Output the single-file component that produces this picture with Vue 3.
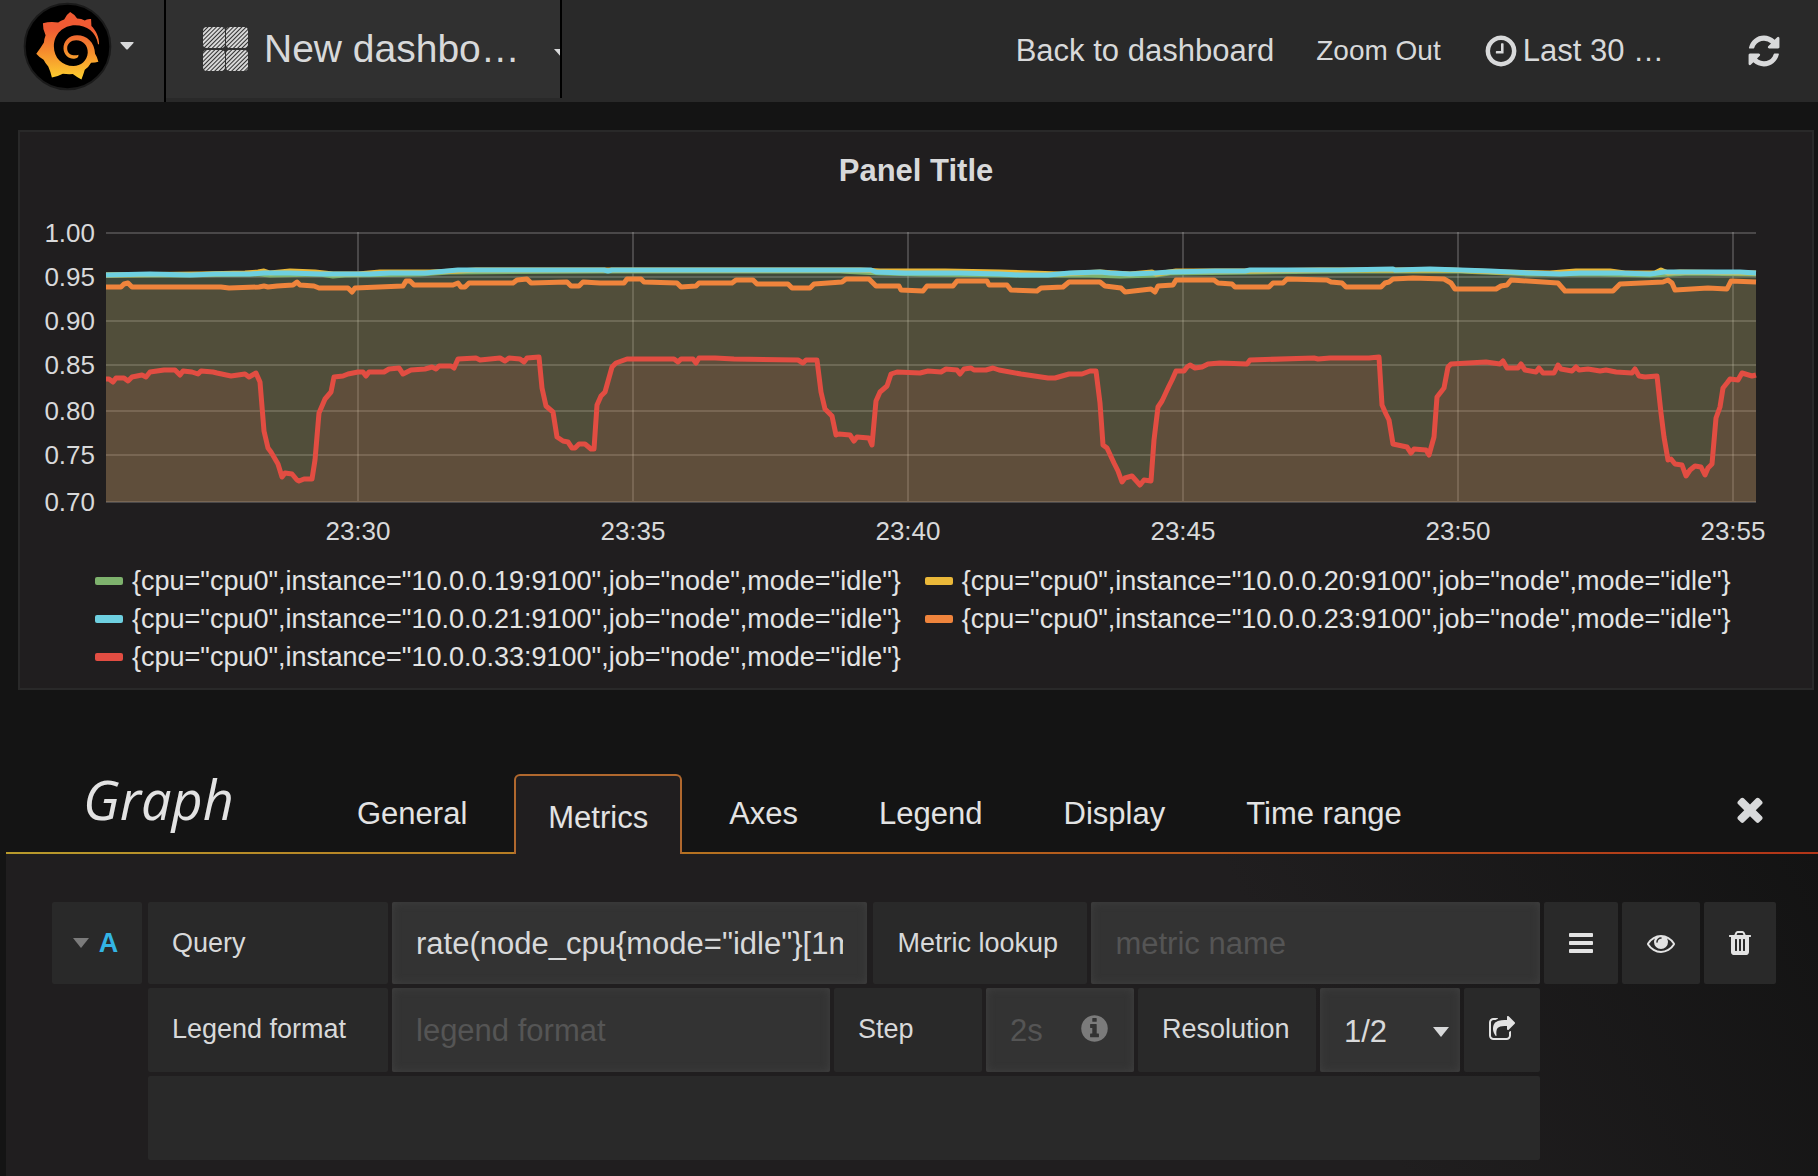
<script setup>
import { ref } from 'vue'

const tabs = ['General', 'Metrics', 'Axes', 'Legend', 'Display', 'Time range']
const activeTab = ref('Metrics')

const query = ref('rate(node_cpu{mode="idle"}[1m])')
const metric = ref('')
const legendFormat = ref('')
const step = ref('')
const resolution = ref('1/2')

const legend = [
  { color: '#7eb26d', instance: '10.0.0.19:9100' },
  { color: '#eab839', instance: '10.0.0.20:9100' },
  { color: '#6ed0e0', instance: '10.0.0.21:9100' },
  { color: '#ef843c', instance: '10.0.0.23:9100' },
  { color: '#e24d42', instance: '10.0.0.33:9100' },
]
const seriesName = (s) => `{cpu="cpu0",instance="${s.instance}",job="node",mode="idle"}`

const yTicks = [
  { label: '1.00', y: 233 },
  { label: '0.95', y: 277 },
  { label: '0.90', y: 321 },
  { label: '0.85', y: 365 },
  { label: '0.80', y: 411 },
  { label: '0.75', y: 455 },
  { label: '0.70', y: 502 },
]
const xTicks = [
  { label: '23:30', x: 358 },
  { label: '23:35', x: 633 },
  { label: '23:40', x: 908 },
  { label: '23:45', x: 1183 },
  { label: '23:50', x: 1458 },
  { label: '23:55', x: 1733 },
]

const cyan = '106,275 150,274 190,275 215,274 250,274 264,273 290,273 320,274 370,274 390,273 425,273 458,270 530,270 604,270 608,271 612,270 700,270 871,270 876,272 905,273 960,273 1000,274 1020,275 1048,275 1070,273 1100,272 1110,273 1130,274 1155,273 1170,272 1215,271 1245,271 1250,270 1340,270 1393,269 1395,270 1430,269 1460,270 1490,271 1530,273 1560,274 1580,273 1620,273 1650,274 1664,272 1690,272 1720,272 1740,272 1756,273'
const yellow = '106,275 200,274 245,273 258,272 264,271 270,273 290,271 315,272 333,274 358,274 380,272 403,272 430,272 458,271 476,270 530,270 640,270 660,270 720,270 860,270 880,271 945,271 1000,272 1030,273 1060,274 1100,272 1130,274 1152,272 1156,274 1176,271 1250,271 1320,270 1340,270 1381,270 1450,270 1500,272 1550,273 1576,271 1610,271 1625,273 1655,273 1661,270 1668,273 1680,272 1756,273'
const green = '106,275 180,275 260,274 270,275 320,274 333,276 345,275 420,274 450,272 600,271 612,271 700,271 840,271 880,273 920,274 1010,275 1048,275 1090,275 1120,276 1155,275 1170,273 1250,272 1340,271 1460,271 1530,274 1600,274 1650,275 1690,273 1756,274'
const orange = '106,287 121,287 124,284 128,283 132,287 221,287 229,288 259,287 264,286 268,287 277,286 293,285 297,282 300,285 314,286 319,288 348,288 352,292 355,288 403,286 406,281 410,281 414,285 453,285 458,283 461,287 465,287 469,283 513,283 517,280 527,279 531,283 567,282 571,286 579,286 583,282 600,283 624,283 627,279 641,279 644,282 677,283 681,287 696,286 699,283 732,283 736,280 753,280 757,284 788,284 792,288 810,288 814,284 842,282 846,279 869,279 873,283 876,286 899,286 901,290 923,291 927,286 953,286 957,281 987,281 989,285 1007,285 1011,290 1037,291 1041,288 1063,287 1069,282 1100,282 1105,286 1121,288 1125,292 1151,289 1155,292 1158,286 1173,285 1176,280 1214,280 1218,283 1232,284 1235,287 1269,287 1273,283 1283,283 1287,279 1327,280 1331,282 1342,283 1346,287 1381,287 1385,283 1389,282 1393,279 1413,278 1444,279 1451,283 1455,289 1496,289 1501,286 1507,285 1511,280 1558,283 1565,291 1613,291 1620,284 1663,282 1668,280 1672,283 1675,290 1708,288 1727,289 1731,281 1756,282'
const red = '106,379 109,379 113,382 116,378 124,378 128,381 132,377 142,375 146,377 150,372 164,370 175,370 180,375 183,371 192,372 198,374 201,371 213,372 217,373 231,376 245,374 249,377 256,373 260,382 264,431 268,448 271,452 278,464 282,477 285,473 292,474 297,480 299,481 304,479 312,479 315,460 319,413 325,399 331,392 334,377 343,376 348,374 358,372 363,372 366,376 369,372 384,372 389,369 399,368 403,374 411,370 425,369 432,367 436,369 439,366 451,366 454,368 458,359 476,358 480,360 500,358 505,361 509,358 520,359 524,362 527,358 539,357 542,388 546,406 553,412 557,437 563,441 568,442 572,448 575,448 579,444 585,444 591,449 594,449 597,405 601,396 605,392 612,367 616,363 627,359 674,359 678,362 681,359 693,359 696,363 699,358 715,358 734,359 798,360 803,363 806,360 817,360 821,392 825,409 832,416 836,435 839,434 850,435 854,441 857,437 869,438 872,445 876,401 880,392 887,386 891,374 897,372 920,373 928,371 941,372 946,369 957,370 960,374 964,369 971,368 974,370 986,370 993,368 999,370 1021,374 1048,378 1055,378 1069,374 1082,374 1090,371 1096,371 1100,403 1103,445 1107,448 1114,463 1118,471 1122,482 1125,478 1132,476 1140,485 1144,480 1151,481 1154,440 1158,407 1162,401 1169,386 1172,380 1176,371 1184,371 1187,367 1190,365 1195,368 1202,367 1208,364 1220,363 1247,364 1250,360 1314,358 1318,359 1330,358 1369,358 1379,357 1382,405 1386,414 1389,420 1393,444 1407,447 1411,453 1414,449 1426,450 1429,455 1434,437 1437,397 1444,388 1448,367 1451,364 1486,362 1500,364 1503,361 1507,368 1518,368 1521,364 1525,370 1536,372 1539,368 1543,373 1554,373 1558,365 1561,369 1572,371 1576,367 1579,370 1588,369 1600,371 1606,370 1616,372 1632,373 1635,369 1639,376 1645,377 1657,376 1661,413 1664,437 1668,460 1671,459 1675,464 1682,465 1686,476 1690,470 1695,466 1701,467 1705,475 1708,468 1712,464 1716,418 1720,407 1723,388 1727,383 1730,379 1738,380 1742,373 1752,376 1756,375'

const series = [
  { color: '#7eb26d', points: green },
  { color: '#eab839', points: yellow },
  { color: '#6ed0e0', points: cyan },
  { color: '#ef843c', points: orange },
  { color: '#e24d42', points: red },
]

const icons = {
  clock: 'M1024 544v448q0 14-9 23t-23 9h-320q-14 0-23-9t-9-23v-64q0-14 9-23t23-9h224v-352q0-14 9-23t23-9h64q14 0 23 9t9 23zm416 352q0-148-73-273t-198-198-273-73-273 73-198 198-73 273 73 273 198 198 273 73 273-73 198-198 73-273zm224 0q0 209-103 385.5t-279.5 279.5-385.5 103-385.5-103-279.5-279.5-103-385.5 103-385.5 279.5-279.5 385.5-103 385.5 103 279.5 279.5 103 385.5z',
  refresh: 'M1639 1056q0 5-1 7-64 268-268 434.5t-478 166.5q-146 0-282.5-55t-243.5-157l-129 129q-19 19-45 19t-45-19-19-45v-448q0-26 19-45t45-19h448q26 0 45 19t19 45-19 45l-137 137q71 66 161 102t187 36q134 0 250-65t186-179q11-17 53-117 8-23 30-23h192q13 0 22.5 9.5t9.5 22.5zm25-800v448q0 26-19 45t-45 19h-448q-26 0-45-19t-19-45 19-45l138-138q-148-137-349-137-134 0-250 65t-186 179q-11 17-53 117-8 23-30 23h-199q-13 0-22.5-9.5t-9.5-22.5v-7q65-268 270-434.5t480-166.5q146 0 284 55.5t245 156.5l130-129q19-19 45-19t45 19 19 45z',
  close: 'M1490 1322q0 40-28 68l-136 136q-28 28-68 28t-68-28l-294-294-294 294q-28 28-68 28t-68-28l-136-136q-28-28-28-68t28-68l294-294-294-294q-28-28-28-68t28-68l136-136q28-28 68-28t68 28l294 294 294-294q28-28 68-28t68 28l136 136q28 28 28 68t-28 68l-294 294 294 294q28 28 28 68z',
  bars: 'M1664 1344v128q0 26-19 45t-45 19h-1408q-26 0-45-19t-19-45v-128q0-26 19-45t45-19h1408q26 0 45 19t19 45zm0-512v128q0 26-19 45t-45 19h-1408q-26 0-45-19t-19-45v-128q0-26 19-45t45-19h1408q26 0 45 19t19 45zm0-512v128q0 26-19 45t-45 19h-1408q-26 0-45-19t-19-45v-128q0-26 19-45t45-19h1408q26 0 45 19t19 45z',
  eye: 'M1664 960q-152-236-381-353 61 104 61 225 0 185-131.5 316.5t-316.5 131.5-316.5-131.5-131.5-316.5q0-121 61-225-229 117-381 353 133 205 333.5 326.5t434.5 121.5 434.5-121.5 333.5-326.5zm-720-384q0-20-14-34t-34-14q-125 0-214.5 89.5t-89.5 214.5q0 20 14 34t34 14 34-14 14-34q0-86 61-147t147-61q20 0 34-14t14-34zm848 384q0 34-20 69-140 230-376.5 368.5t-499.5 138.5-499.5-139-376.5-368q-20-35-20-69t20-69q140-229 376.5-368t499.5-139 499.5 139 376.5 368q20 35 20 69z',
  trash: 'M704 1376v-704q0-14-9-23t-23-9h-64q-14 0-23 9t-9 23v704q0 14 9 23t23 9h64q14 0 23-9t9-23zm256 0v-704q0-14-9-23t-23-9h-64q-14 0-23 9t-9 23v704q0 14 9 23t23 9h64q14 0 23-9t9-23zm256 0v-704q0-14-9-23t-23-9h-64q-14 0-23 9t-9 23v704q0 14 9 23t23 9h64q14 0 23-9t9-23zm-544-992h448l-48-117q-7-9-17-11h-317q-10 2-17 11zm928 32v64q0 14-9 23t-23 9h-96v948q0 83-47 143.5t-113 60.5h-832q-66 0-113-58.5t-47-141.5v-952h-96q-14 0-23-9t-9-23v-64q0-14 9-23t23-9h309l70-167q15-37 54-63t79-26h320q40 0 79 26t54 63l70 167h309q14 0 23 9t9 23z',
  info: 'M1152 1376v-160q0-14-9-23t-23-9h-96v-512q0-14-9-23t-23-9h-320q-14 0-23 9t-9 23v160q0 14 9 23t23 9h96v320h-96q-14 0-23 9t-9 23v160q0 14 9 23t23 9h448q14 0 23-9t9-23zm-128-896v-160q0-14-9-23t-23-9h-192q-14 0-23 9t-9 23v160q0 14 9 23t23 9h192q14 0 23-9t9-23zm640 416q0 209-103 385.5t-279.5 279.5-385.5 103-385.5-103-279.5-279.5-103-385.5 103-385.5 279.5-279.5 385.5-103 385.5 103 279.5 279.5 103 385.5z',
  share: 'M1472 989v259q0 119-84.5 203.5t-203.5 84.5h-832q-119 0-203.5-84.5t-84.5-203.5v-832q0-119 84.5-203.5t203.5-84.5h255q13 0 22.5 9.5t9.5 22.5q0 27-26 32-77 26-133 60-10 4-16 4h-112q-66 0-113 47t-47 113v832q0 66 47 113t113 47h832q66 0 113-47t47-113v-214q0-19 18-29 28-13 54-37 16-16 35-8 21 9 21 29zm237-496l-384 384q-18 19-45 19-12 0-25-5-39-17-39-59v-192h-160q-323 0-438 131-119 137-74 473 3 23-20 34-8 2-12 2-16 0-26-13-10-14-21-31t-39.5-68.5-49.5-99.5-38.5-114-17.5-122q0-49 3.5-91t14-90 28-88 47-81.5 68.5-74 94.5-61.5 124.5-48.5 159.5-30.5 196.5-11h160v-192q0-42 39-59 13-5 25-5 26 0 45 19l384 384q19 19 19 45t-19 45z',
}
</script>

<template>
  <div class="page">
    <nav class="navbar">
      <a class="brand" href="#" aria-label="Main menu">
        <svg class="brand-logo" viewBox="70 4 268 268" aria-hidden="true">
          <defs>
            <linearGradient id="flame" x1="0" y1="0" x2="0" y2="1">
              <stop offset="0.25" stop-color="#f05a33" />
              <stop offset="0.6" stop-color="#f58e2d" />
              <stop offset="1" stop-color="#fdd02f" />
            </linearGradient>
          </defs>
          <circle cx="204" cy="138" r="129" fill="#000" stroke="#1a1a1a" stroke-width="6" />
          <path
            fill="url(#flame)"
            d="M299 131C300 108 288 88 276 76L275 55Q262 54 256 60Q246 54 233 54Q224 40 212 34Q200 42 194 57Q184 60 176 66Q152 62 130 68Q129 86 138 104Q134 114 133 126Q122 144 110 160Q120 172 132 178Q138 190 146 198Q154 216 157 231Q176 228 190 220Q204 222 220 221Q234 232 246 237Q252 222 256 208Q268 200 275 187Q288 187 297 184Q294 170 287 160C286 125 262 104 233 104C208 104 191 122 192 145C193 164 208 176 224 175C234 174 238 170 237 163C222 168 203 162 203 143C203 129 215 119 230 119C252 119 266 136 265 157C263 182 244 197 222 197C188 197 163 172 163 138C163 100 192 74 227 74C262 74 290 94 296 131Z"
          />
        </svg>
        <svg class="brand-caret" viewBox="0 0 14 8" aria-hidden="true"><path d="M1 0h12q1 0 .5 1L8 7Q7 8 6 7L.5 1Q0 0 1 0z" /></svg>
      </a>
      <button class="dash-title" type="button">
        <svg class="dash-icon" viewBox="0 0 45 44" aria-hidden="true">
          <defs>
            <pattern id="hatch" width="3" height="3" patternUnits="userSpaceOnUse" patternTransform="rotate(45)">
              <rect width="3" height="3" fill="#d8d8d8" />
              <rect width="1" height="3" fill="#303030" />
            </pattern>
          </defs>
          <rect width="22" height="21" rx="4" fill="url(#hatch)" />
          <rect x="23" width="22" height="21" rx="4" fill="url(#hatch)" />
          <rect y="23" width="22" height="21" rx="4" fill="url(#hatch)" />
          <rect x="23" y="23" width="22" height="21" rx="4" fill="url(#hatch)" />
        </svg>
        <span class="dash-name">New dashbo…</span>
        <svg class="dash-caret" viewBox="0 0 14 8" aria-hidden="true"><path d="M0 0h14L7 8z" /></svg>
      </button>
      <div class="nav-actions">
        <a class="nav-back" href="#">Back to dashboard</a>
        <a class="nav-zoom" href="#">Zoom Out</a>
        <button class="nav-time" type="button">
          <svg class="nav-icon" viewBox="0 0 1792 1792" aria-hidden="true"><path :d="icons.clock" /></svg>
          <span>Last 30 …</span>
        </button>
        <button class="nav-refresh" type="button" aria-label="Refresh">
          <svg class="nav-icon" viewBox="0 0 1792 1792" aria-hidden="true"><path :d="icons.refresh" /></svg>
        </button>
      </div>
    </nav>

    <section class="panel">
      <h2 class="panel-title">Panel Title</h2>
      <svg class="chart" viewBox="20 208 1792 344" role="img" aria-label="CPU idle rate">
        <g class="grid">
          <path v-for="t in yTicks" :key="t.label" :d="`M106 ${t.y}H1756`" />
          <path v-for="t in xTicks" :key="t.label" :d="`M${t.x} 232V501`" />
        </g>
        <polygon v-for="s in series" :key="'f' + s.color" :points="`106,502 ${s.points} 1756,502`" :fill="s.color" fill-opacity="0.1" />
        <polyline v-for="s in series" :key="'l' + s.color" class="line" :points="s.points" :stroke="s.color" />
        <g class="tick-labels">
          <text v-for="t in yTicks" :key="t.label" x="95" :y="t.y + 9" text-anchor="end">{{ t.label }}</text>
          <text v-for="t in xTicks" :key="t.label" :x="t.x" y="540" text-anchor="middle">{{ t.label }}</text>
        </g>
      </svg>
      <ul class="legend">
        <li v-for="s in legend" :key="s.instance" class="legend-item">
          <span class="swatch" :style="{ background: s.color }"></span>
          <a href="#">{{ seriesName(s) }}</a>
        </li>
      </ul>
    </section>

    <section class="editor">
      <header class="editor-head">
        <h1 class="editor-title">Graph</h1>
        <div class="tabs" role="tablist">
          <button
            v-for="t in tabs"
            :key="t"
            type="button"
            role="tab"
            class="tab"
            :class="{ active: t === activeTab }"
            :aria-selected="t === activeTab"
            @click="activeTab = t"
          >{{ t }}</button>
        </div>
        <button class="editor-close" type="button" aria-label="Close">
          <svg viewBox="0 0 1792 1792" aria-hidden="true"><path :d="icons.close" /></svg>
        </button>
      </header>

      <form class="editor-body" @submit.prevent>
        <button class="cell query-id" type="button" aria-label="Query A">
          <svg class="id-caret" viewBox="0 0 16 10" aria-hidden="true"><path d="M0 0h16L8 10z" /></svg>
          <span>A</span>
        </button>

        <div class="rows">
          <div class="row row-first">
            <label class="cell label-main" for="query">Query</label>
            <input id="query" v-model="query" class="field query-field" type="text" spellcheck="false" />
            <label class="cell label-lookup" for="metric">Metric lookup</label>
            <input id="metric" v-model="metric" class="field metric-field" type="text" placeholder="metric name" />
          </div>
          <div class="row">
            <label class="cell label-main" for="legend-format">Legend format</label>
            <input id="legend-format" v-model="legendFormat" class="field legend-field" type="text" placeholder="legend format" />
            <label class="cell label-step" for="step">Step</label>
            <div class="step-wrap">
              <input id="step" v-model="step" class="field step-field" type="text" placeholder="2s" />
              <svg class="step-info" viewBox="0 0 1792 1792" aria-hidden="true"><path :d="icons.info" /></svg>
            </div>
            <label class="cell label-resolution" for="resolution">Resolution</label>
            <div class="select-wrap">
              <select id="resolution" v-model="resolution" class="field">
                <option>1/1</option>
                <option>1/2</option>
                <option>1/3</option>
                <option>1/4</option>
                <option>1/5</option>
                <option>1/10</option>
              </select>
              <svg class="select-caret" viewBox="0 0 16 10" aria-hidden="true"><path d="M0 0h16L8 10z" /></svg>
            </div>
            <a class="cell share" href="#" aria-label="Open in Prometheus">
              <svg class="cell-icon" viewBox="0 0 1792 1792" aria-hidden="true"><path :d="icons.share" /></svg>
            </a>
          </div>
          <div class="cell blank"></div>
        </div>

        <div class="tools">
          <button class="cell tool-menu" type="button" aria-label="Query menu">
            <svg class="cell-icon" viewBox="0 0 1792 1792" aria-hidden="true"><path :d="icons.bars" /></svg>
          </button>
          <button class="cell tool-eye" type="button" aria-label="Toggle query">
            <svg class="cell-icon" viewBox="0 0 1792 1792" aria-hidden="true"><path :d="icons.eye" /></svg>
          </button>
          <button class="cell tool-trash" type="button" aria-label="Remove query">
            <svg class="cell-icon" viewBox="0 0 1792 1792" aria-hidden="true"><path :d="icons.trash" /></svg>
          </button>
        </div>
      </form>
    </section>
  </div>
</template>

<style>
body {
  background: #141414;
}
</style>

<style scoped>
* {
  box-sizing: border-box;
}

.page {
  display: flex;
  flex-direction: column;
  min-height: 100vh;
  background: #141414;
  color: #d8d9da;
  font-family: "Liberation Sans", Arial, sans-serif;
}

button,
input,
select {
  margin: 0;
  border: 0;
  padding: 0;
  background: none;
  color: inherit;
  font: inherit;
}

a {
  color: inherit;
  text-decoration: none;
}

svg {
  flex: none;
  fill: currentColor;
}

/* Top bar */
.navbar {
  display: flex;
  align-items: flex-start;
  height: 102px;
  background: #292929;
}

.brand {
  display: flex;
  flex: none;
  align-items: center;
  gap: 8px;
  width: 166px;
  height: 102px;
  padding: 0 0 10px 23px;
  border-right: 2px solid #000;
  background: #303030;
}

.brand-logo {
  width: 89px;
  height: 89px;
}

.brand-caret {
  width: 14px;
  height: 8px;
}

.dash-title {
  display: flex;
  flex: none;
  align-items: center;
  width: 396px;
  height: 98px;
  padding-left: 37px;
  border-right: 2px solid #000;
  background: #303030;
  font-size: 39px;
  overflow: hidden;
}

.dash-icon {
  width: 45px;
  height: 44px;
  margin-right: 16px;
}

.dash-name {
  flex: none;
  width: 290px;
  text-align: left;
  white-space: nowrap;
}

.dash-caret {
  width: 14px;
  height: 8px;
  margin-top: 8px;
}

.nav-actions {
  display: flex;
  align-items: center;
  justify-content: flex-end;
  gap: 42px;
  flex: 1;
  height: 102px;
  padding-right: 36px;
  white-space: nowrap;
}

.nav-back {
  font-size: 31px;
}

.nav-zoom {
  font-size: 28px;
}

.nav-time {
  display: flex;
  align-items: center;
  gap: 4px;
  font-size: 31px;
}

.nav-refresh {
  display: flex;
  margin-left: 40px;
}

.nav-icon {
  width: 36px;
  height: 36px;
}

/* Graph panel */
.panel {
  margin: 28px 4px 0 18px;
  border: 2px solid #292929;
  background: #201e1f;
}

.panel-title {
  margin: 0;
  padding-top: 19px;
  height: 76px;
  font-size: 31px;
  line-height: 40px;
  font-weight: bold;
  text-align: center;
}

.chart {
  display: block;
  width: 100%;
  height: auto;
}

.grid path {
  fill: none;
  stroke: #c8c8c8;
  stroke-opacity: 0.25;
  stroke-width: 2;
}

.line {
  fill: none;
  stroke-width: 5;
  stroke-linejoin: round;
}

.tick-labels {
  font-size: 26px;
}

.legend {
  display: flex;
  flex-wrap: wrap;
  margin: 0;
  padding: 10px 40px 12px 75px;
  list-style: none;
  font-size: 27px;
  line-height: 38px;
  color: #e3e3e3;
}

.legend-item {
  display: flex;
  align-items: center;
  gap: 9px;
  margin-right: 24px;
  white-space: nowrap;
}

.swatch {
  width: 28px;
  height: 8px;
  border-radius: 2px;
}

/* Panel editor */
.editor {
  display: flex;
  flex-direction: column;
  flex: 1;
  margin: 84px 0 0 6px;
}

.editor-head {
  display: flex;
  align-items: center;
  height: 80px;
  padding: 0 49px 2px 77px;
  background: linear-gradient(90deg, #b89a2c, #b5651d 50%, #b23518) left bottom / 100% 2px no-repeat;
}

.editor-title {
  flex: none;
  width: 240px;
  margin: 0 0 28px;
  color: #e3e3e3;
  font-family: "Open Sans", sans-serif;
  font-size: 54px;
  line-height: 60px;
  font-style: italic;
  font-weight: 400;
}

.tabs {
  display: flex;
  gap: 13px;
}

.tab {
  height: 78px;
  padding: 2px 32px 0;
  border: 2px solid transparent;
  color: #e3e3e3;
  font-size: 31px;
  white-space: nowrap;
}

.tab.active {
  height: 80px;
  margin-bottom: -2px;
  padding-top: 6px;
  border-color: #b0682e;
  border-bottom: 0;
  border-radius: 6px 6px 0 0;
  background: #201e1f;
}

.editor-close {
  display: flex;
  margin: 0 0 8px auto;
}

.editor-close svg {
  width: 38px;
  height: 38px;
}

.editor-body {
  display: flex;
  align-items: flex-start;
  gap: 4px;
  flex: 1;
  padding: 48px 42px 16px 46px;
  background: linear-gradient(60deg, #201e1f 70%, #131313 100%);
}

.cell {
  display: flex;
  flex: none;
  align-items: center;
  padding: 0 24px;
  border-radius: 2px;
  background: #292929;
  font-size: 27px;
  white-space: nowrap;
}

.query-id {
  justify-content: center;
  gap: 10px;
  width: 90px;
  height: 82px;
  margin-right: 2px;
  padding: 0 3px 0 0;
  color: #33b5e5;
  font-weight: bold;
}

.id-caret {
  width: 16px;
  height: 10px;
  color: #7b7b7b;
}

.rows {
  display: flex;
  flex-direction: column;
  gap: 4px;
  flex: 1;
  min-width: 0;
}

.row {
  display: flex;
  gap: 4px;
  height: 84px;
}

.row > label {
  padding-bottom: 2px;
}

.row-first {
  height: 82px;
}

.row-first > label {
  padding-bottom: 0;
}

.label-main {
  width: 240px;
}

.label-lookup {
  width: 214px;
  margin-left: 2px;
}

.label-step {
  width: 148px;
}

.label-resolution {
  width: 178px;
}

.field {
  width: 100%;
  height: 100%;
  min-width: 0;
  padding: 2px 24px 0;
  border-radius: 2px;
  background: #333;
  box-shadow: inset 0 0 8px #404040;
  font-size: 31px;
}

.field::placeholder {
  color: #555;
  opacity: 1;
}

.query-field {
  flex: 477 1 0;
}

.metric-field {
  flex: 447 1 0;
}

.legend-field {
  flex: 1;
}

.step-wrap,
.select-wrap {
  position: relative;
  flex: none;
  width: 148px;
}

.select-wrap {
  width: 140px;
}

.step-info {
  position: absolute;
  top: 25px;
  right: 24px;
  width: 31px;
  height: 31px;
  color: #7b7b7b;
}

.select-wrap select {
  appearance: none;
}

.select-caret {
  position: absolute;
  top: 39px;
  right: 11px;
  width: 16px;
  height: 10px;
  pointer-events: none;
}

.cell-icon {
  width: 28px;
  height: 28px;
  color: #e3e3e3;
}

.share {
  justify-content: center;
  width: 76px;
  padding: 0;
}

.blank {
  height: 84px;
}

.tools {
  display: flex;
  gap: 4px;
  height: 82px;
}

.tools .cell {
  justify-content: center;
  padding: 0;
}

.tool-menu {
  width: 74px;
}

.tool-eye {
  width: 78px;
}

.tool-trash {
  width: 72px;
}
</style>
